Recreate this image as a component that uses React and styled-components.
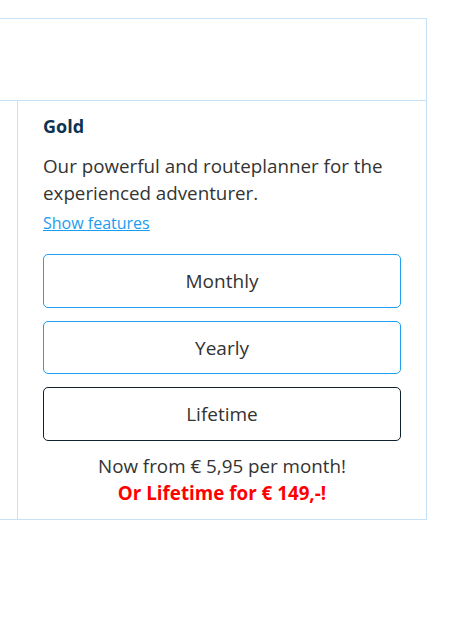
import React from "react";
import styled, { createGlobalStyle } from "styled-components";

const Global = createGlobalStyle`
  html, body { margin: 0; padding: 0; background: #fff; }
  body { font-family: "Open Sans", "Noto Sans", sans-serif; }
`;

const Table = styled.div`
  margin-top: 18px;
  margin-left: -60px;
  width: 487px;
  border: 1px solid #c4e3fb;
  box-sizing: border-box;
  display: grid;
  grid-template-columns: 77px 1fr;
  grid-template-rows: 82px auto;
`;

const HeaderCell = styled.div`
  grid-column: 1 / span 2;
  border-bottom: 1px solid #c4e3fb;
`;

const SideCell = styled.div`
  border-right: 1px solid #c4e3fb;
`;

const PlanCell = styled.div`
  padding: 13px 25px 12px 25px;
  display: flex;
  flex-direction: column;
`;

const Title = styled.h3`
  margin: 0;
  font-size: 18px;
  line-height: 24px;
  font-weight: 700;
  color: #0e3351;
`;

const Description = styled.p`
  margin: 15px 0 0;
  font-size: 18.8px;
  line-height: 27px;
  color: #333;
`;

const Link = styled.a`
  margin-top: 4px;
  font-size: 16px;
  line-height: 24px;
  color: #1a9cf0;
  text-decoration: underline;
  cursor: pointer;
  align-self: flex-start;
`;

const Options = styled.div`
  margin-top: 19px;
  display: flex;
  flex-direction: column;
  gap: 13px;
`;

const Option = styled.button`
  height: ${(p) => p.$h}px;
  box-sizing: border-box;
  background: #fff;
  border: 1px solid ${(p) => (p.$dark ? "#0f2230" : "#1ea0f0")};
  border-radius: 5px;
  font-family: inherit;
  font-size: 19px;
  color: #333;
  cursor: pointer;
`;

const Price = styled.div`
  margin-top: 12px;
  text-align: center;
  font-size: 18.8px;
  line-height: 27px;
  color: #333;
`;

const Promo = styled.div`
  text-align: center;
  font-size: 18.8px;
  line-height: 27px;
  font-weight: 700;
  color: #ff0000;
`;

export default function App() {
  return (
    <>
      <Global />
      <Table>
        <HeaderCell />
        <SideCell />
        <PlanCell>
          <Title>Gold</Title>
          <Description>
            Our powerful and routeplanner for the experienced adventurer.
          </Description>
          <Link>Show features</Link>
          <Options>
            <Option $h={54}>Monthly</Option>
            <Option $h={53}>Yearly</Option>
            <Option $h={54} $dark>Lifetime</Option>
          </Options>
          <Price>Now from € 5,95 per month!</Price>
          <Promo>Or Lifetime for € 149,-!</Promo>
        </PlanCell>
      </Table>
    </>
  );
}
